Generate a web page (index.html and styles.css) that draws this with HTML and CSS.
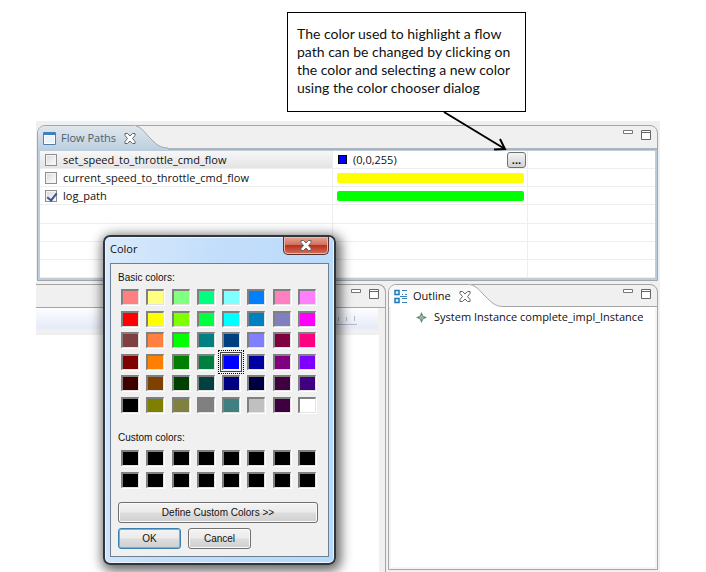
FILE: index.html
```html
<!DOCTYPE html>
<html lang="en">
<head>
<meta charset="utf-8">
<title>Flow Paths</title>
<link rel="stylesheet" href="styles.css">
</head>
<body>
<svg class="defs" aria-hidden="true">
  <symbol id="close" viewBox="0 0 12 11"><path d="M1 .5h2.500L6 3 8.500.5H11v2L8.500 5.500l2.500 3v2H8.500L6 8l-2.500 2.500H1v-2l2.500-3L1 2.500z" fill="#fff" stroke="#666"/></symbol>
  <symbol id="min" viewBox="0 0 11 5"><path d="M.5.5h9v3h-9z" fill="#fff" stroke="#777"/></symbol>
  <symbol id="max" viewBox="0 0 11 11"><path d="M.5.5h9v9h-9zM1 2.500h9" fill="#fff" stroke="#666"/></symbol>
</svg>
<aside class="callout">The color used to highlight a flow<br>path can be changed by clicking on<br>the color and selecting a new color<br>using the color chooser dialog
  <svg class="arrow" width="66" height="42" aria-hidden="true"><path d="M1 1 62 38M51 38.500l11-.5-5-10" fill="none" stroke="#000" stroke-width="2"/></svg>
</aside>
<main class="workbench">
  <section class="view active">
    <header class="view-head">
      <h2 class="tab">
        <svg width="13" height="13" aria-hidden="true"><path d="M.5.5h12v12H.5z" fill="#fff" stroke="#4f7fac"/><path d="M1 1h11v2H1z" fill="#3481c9"/><path d="M2 4h9v7H2z" fill="#eaf3fa"/></svg>
        Flow Paths
        <svg class="x" width="12" height="11" aria-hidden="true"><use href="#close"/></svg>
      </h2>
      <svg class="curve" width="36" height="25" aria-hidden="true"><defs><linearGradient id="blue" x2="0" y2="1"><stop stop-color="#e0e7ed"/><stop offset="1" stop-color="#bccfdf"/></linearGradient></defs><path d="M0 0C9 0 12 7 18 13S28 23 36 23V25H0z" fill="url(#blue)"/><path d="M0 .5C9 .5 12 7 18 13S28 23 36 23" fill="none" stroke="#a0a6ab"/></svg>
      <div class="bar"><svg width="11" height="5"><use href="#min"/></svg><svg width="11" height="11"><use href="#max"/></svg></div>
    </header>
    <table class="paths">
      <colgroup><col class="c-name"><col class="c-color"><col></colgroup>
      <tr class="selected"><td><label><input type="checkbox">set_speed_to_throttle_cmd_flow</label></td><td><div class="edit"><i class="chip"></i><span>(0,0,255)</span><button type="button">...</button></div></td><td></td></tr>
      <tr><td><label><input type="checkbox">current_speed_to_throttle_cmd_flow</label></td><td><div class="swath yellow"></div></td><td></td></tr>
      <tr><td><label><input type="checkbox" checked>log_path</label></td><td><div class="swath green"></div></td><td></td></tr>
      <tr><td></td><td></td><td></td></tr>
      <tr><td></td><td></td><td></td></tr>
      <tr><td></td><td></td><td></td></tr>
      <tr><td></td><td></td><td></td></tr>
    </table>
  </section>
  <div class="lower">
    <section class="editor">
      <div class="bar"><svg width="11" height="5"><use href="#min"/></svg><svg width="11" height="11"><use href="#max"/></svg></div>
      <div class="ruler"><svg width="24" height="14" aria-hidden="true"><path d="M5.500 2v4M13.500 2v4M21.500 1v5M0 9.500h24" stroke="#b5b9c4"/></svg></div>
      <div class="canvas"></div>
    </section>
    <section class="view outline">
      <header class="view-head">
        <h2 class="tab">
          <svg width="14" height="15" aria-hidden="true"><path d="M1 1.500h4v4H1zM1 9.500h4v4H1z" fill="#e6f4fc" stroke="#1f78b8" stroke-width="1.500"/><path d="M8 1.500h5M8 5.500h1M11 5.500h2M8 9.500h5M8 13.500h5M6 7.500h7" stroke="#3a7fb4"/></svg>
          Outline
          <svg class="x" width="12" height="11" aria-hidden="true"><use href="#close"/></svg>
        </h2>
        <svg class="curve" width="36" height="23" aria-hidden="true"><path d="M0 0C9 0 12 6 18 12S28 22 36 22V23H0z" fill="#fff"/><path d="M0 .5C9 .5 12 6 18 12S28 22.500 36 22.500" fill="none" stroke="#a5a5a5"/></svg>
        <div class="bar"><svg width="11" height="5"><use href="#min"/></svg><svg width="11" height="11"><use href="#max"/></svg></div>
      </header>
      <div class="tree"><svg width="11" height="11" aria-hidden="true"><path d="M5.500 0 7.200 3.800 11 5.500 7.200 7.200 5.500 11 3.800 7.200 0 5.500 3.800 3.800z" fill="#4f9170"/><circle cx="5.500" cy="5.500" r="2.200" fill="#a9a9a2"/></svg>System Instance complete_impl_Instance</div>
    </section>
  </div>
</main>
<section class="dialog" role="dialog" aria-labelledby="dlg-title">
  <header class="dialog-head"><h2 id="dlg-title">Color</h2><button type="button" class="dialog-close" aria-label="Close"><svg width="12" height="11" aria-hidden="true"><use href="#close"/></svg></button></header>
  <div class="client">
    <h3>Basic colors:</h3>
    <div class="swatches basic"></div>
    <h3 class="custom-title">Custom colors:</h3>
    <div class="swatches custom"></div>
    <button type="button" class="btn">Define Custom Colors &gt;&gt;</button>
    <div class="actions"><button type="button" class="btn default">OK</button><button type="button" class="btn">Cancel</button></div>
  </div>
</section>
<script src="palette.js"></script>
</body>
</html>
```
FILE: palette.js
```js
const basic = [
  'ff8080', 'ffff80', '80ff80', '00ff80', '80ffff', '0080ff', 'ff80c0', 'ff80ff',
  'ff0000', 'ffff00', '80ff00', '00ff40', '00ffff', '0080c0', '8080c0', 'ff00ff',
  '804040', 'ff8040', '00ff00', '008080', '004080', '8080ff', '800040', 'ff0080',
  '800000', 'ff8000', '008000', '008040', '0000ff', '0000a0', '800080', '8000ff',
  '400000', '804000', '004000', '004040', '000080', '000040', '400040', '400080',
  '000000', '808000', '808040', '808080', '408080', 'c0c0c0', '400040', 'ffffff'
];
const fill = (selector, colors, selected) => {
  const box = document.querySelector(selector);
  colors.forEach((c, i) => {
    const b = document.createElement('button');
    b.type = 'button';
    b.className = 'swatch' + (i === selected ? ' current' : '');
    b.style.backgroundColor = '#' + c;
    b.setAttribute('aria-label', '#' + c);
    box.append(b);
  });
};
fill('.basic', basic, 28);
fill('.custom', Array(16).fill('000000'), -1);
```
FILE: styles.css
```css
* { box-sizing: border-box; }
body {
  margin: 0;
  min-height: 100vh;
  padding: 12px 46px 0 36px;
  display: flex;
  flex-direction: column;
  background: #fff;
  color: #111;
  font: 11px/18px "Open Sans", "Noto Sans", sans-serif;
  position: relative;
}
h2, h3 { margin: 0; font: inherit; }
svg { display: block; flex: none; }
button { font: inherit; color: inherit; padding: 0; }
.defs { position: absolute; width: 0; height: 0; }

.callout {
  position: relative;
  width: 239px;
  margin: 0 0 9px 251px;
  padding: 12px 9px 14px;
  border: 1px solid #000;
  font: 14px/18px Lato, sans-serif;
  white-space: nowrap;
}
.arrow { position: absolute; left: 155px; top: 98px; z-index: 2; }

.workbench {
  flex: 1;
  display: flex;
  flex-direction: column;
  gap: 3px;
  padding: 4px 2px 0 1px;
  background: #f0f0f0;
}
.view {
  display: flex;
  flex-direction: column;
  border: 1px solid #a5a5a5;
  border-radius: 8px 8px 0 0;
}
.view-head { display: flex; height: 22px; }
.tab { position: relative; z-index: 1; display: flex; align-items: center; gap: 5px; padding-left: 5px; border-radius: 7px 0 0 0; }
.tab .x { margin-left: 3px; }
.curve { margin: -1px 0 0 -4px; }
.bar {
  flex: 1;
  display: flex;
  justify-content: flex-end;
  gap: 7px;
  padding: 4px 5px 0 0;
  border-bottom: 1px solid #a5a5a5;
}
.active .view-head { height: 24px; }
.active .tab { color: #4e5d6c; background: linear-gradient(#e0e7ed, #bccfdf); }
.active .bar { border-bottom: 2px solid #b0b4b8; }

.paths {
  width: auto;
  height: 130px;
  table-layout: fixed;
  border-collapse: separate;
  border-spacing: 0;
  border: 2px solid #bccddd;
  border-top-width: 1px;
  background: #fff;
  min-width: 100%;
}
.c-name { width: 293px; }
.c-color { width: 195px; }
.paths td { height: 18px; padding: 0; border-right: 1px solid #eee; border-bottom: 1px solid #eee; line-height: 17px; }
.paths td:last-child { border-right: 0; }
.selected td:first-child { background: linear-gradient(#f7f7f7, #e4e4e4); }
.paths label { display: flex; align-items: center; gap: 6px; padding-left: 5px; }
.paths input {
  appearance: none;
  width: 12px;
  height: 12px;
  margin: 0;
  border: 1px solid #8e8f8f;
  background: linear-gradient(135deg, #d4d7da, #fff);
  box-shadow: inset 0 0 0 1px #f4f4f4;
}
.paths input:checked::after {
  content: "";
  display: block;
  width: 4px;
  height: 8px;
  margin: 0 0 0 3px;
  border: solid #3c5590;
  border-width: 0 2px 2px 0;
  transform: rotate(38deg);
}
.edit { display: flex; align-items: center; gap: 6px; padding: 0 1px 0 5px; }
.chip { width: 9px; height: 9px; border: 1px solid #000; background: #00f; }
.edit button {
  width: 19px;
  height: 16px;
  margin-left: auto;
  border: 1px solid #707070;
  border-radius: 3px;
  background: linear-gradient(#f4f4f4, #d2d2d2);
  font-weight: bold;
  line-height: 12px;
}
.swath { height: 10px; margin: 0 3px 0 4px; border-radius: 2px; }
.yellow { background: #ff0; }
.green { background: #0f0; }

.lower { flex: 1; display: grid; grid-template-columns: 350px 1fr; gap: 2px; margin-left: -1px; }
.editor {
  display: flex;
  flex-direction: column;
  border: solid #a5a5a5;
  border-width: 1px 1px 0 0;
  border-radius: 0 8px 0 0;
}
.editor .bar { flex: 0 0 23px; padding-top: 4px; }
.ruler {
  height: 27px;
  padding: 7px 21px 0 0;
  margin-right: 7px;
  display: flex;
  justify-content: flex-end;
  background: linear-gradient(#fdfdff, #e6ebf8 20px, #f0f0f0 22px);
}
.canvas { flex: 1; margin-right: 1px; background: #fff; border-right: 5px solid #f0f0f0; }
.outline { margin-bottom: 2px; }
.outline .tab { background: linear-gradient(#f7f7f7, #fff); }
.tree {
  flex: 1;
  display: flex;
  gap: 7px;
  padding: 1px 0 0 25px;
  border: 2px solid #f4f4f4;
  border-top: 0;
  background: #fff;
  white-space: nowrap;
}
.tree svg { margin-top: 4px; }

.dialog {
  position: absolute;
  left: 103px;
  top: 235px;
  width: 233px;
  padding: 0 5px 6px;
  border: 2px solid #30363d;
  border-radius: 7px;
  background: linear-gradient(100deg, #d9eafc, #c3defa 40%, #b7d9fb);
  box-shadow: inset 0 0 0 1px #eaf5ff, 2px 3px 12px 3px #0009;
  font: 10px/14px "Liberation Sans", Arial, sans-serif;
}
.dialog-head { display: flex; justify-content: space-between; height: 26px; }
.dialog-head h2 { font: 11px/24px "Open Sans", sans-serif; }
.dialog-close {
  display: grid;
  place-items: center;
  width: 46px;
  height: 18px;
  border: 1px solid #59322f;
  border-top: 0;
  border-radius: 0 0 5px 5px;
  background: linear-gradient(#e6a597, #d3705c 45%, #b8321c 50%, #d3705c);
  box-shadow: inset 0 0 0 1px #f0b4a8;
}
.client { padding: 7px 10px 7px 7px; border: 1px solid #6d7f90; background: #f0f0f0; }
.swatches {
  display: grid;
  grid-template-columns: repeat(8, 18px);
  justify-content: space-between;
  align-content: space-between;
  padding: 0 2px 0 3px;
}
.basic { height: 124px; margin-top: 4px; }
.custom { height: 38px; margin-top: 5px; }
.custom-title { margin-top: 18px; }
.swatch {
  width: 18px;
  height: 16px;
  border: solid;
  border-width: 2px 1px 1px 2px;
  border-color: #808080 #e3e3e3 #e3e3e3 #808080;
  box-shadow: 1px 1px 0 #fff;
}
.current { border-color: #555 #fff #fff #555; box-shadow: 0 0 0 1px #f0f0f0, 0 0 0 2px #444; outline: 1px dotted #000; outline-offset: 3px; }
.btn {
  display: block;
  width: 100%;
  height: 21px;
  margin-top: 14px;
  border: 1px solid #707070;
  border-radius: 3px;
  background: linear-gradient(#f3f3f3, #ebebeb 48%, #ddd 52%, #cfcfcf);
  box-shadow: inset 0 0 0 1px #fafafa;
}
.actions { display: flex; gap: 7px; margin-top: 5px; }
.actions .btn { width: 63px; margin: 0; }
.default { border-color: #3c7fb1; box-shadow: inset 0 0 0 1px #48c4ef; }
```
